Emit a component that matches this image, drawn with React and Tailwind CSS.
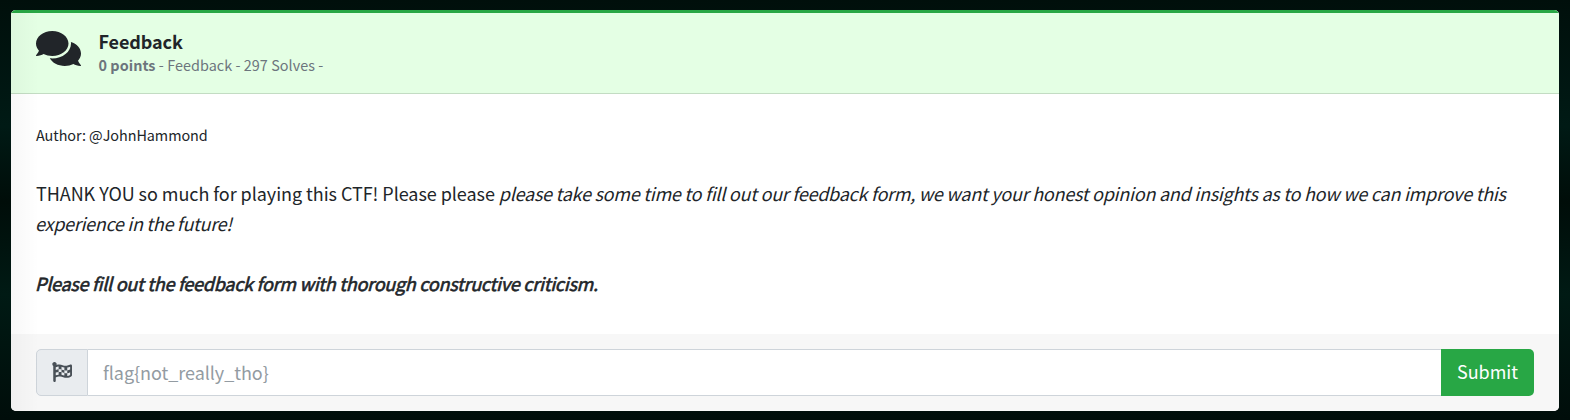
import { FaComments, FaFlagCheckered } from "react-icons/fa";

export default function App() {
  return (
    <div className="h-[420px] w-[1570px] overflow-hidden bg-[linear-gradient(to_bottom,#000f0b,#001a15_30%,#000d09_48%,#001a14_70%,#000d0a)] pt-[10px] pr-[11px] pl-[11px] font-['Noto_Sans_CJK_SC',sans-serif] text-[#212529]">
      <div className="relative flex h-[401px] flex-col overflow-hidden rounded-[5px] bg-white">
        <header className="flex h-[84px] shrink-0 border-t-[3px] border-b border-t-[#28a745] border-b-[#c3dcc3] bg-[#e4ffe4] pl-[25px]">
          <FaComments className="mt-[12.6px] h-[45px] w-[45px] shrink-0" />
          <div className="ml-[17.5px] pt-[16px] whitespace-nowrap">
            <h5 className="text-[18px] leading-[24px] font-bold tracking-[-0.1px]">Feedback</h5>
            <p className="text-[14.4px] leading-[24px] tracking-[0.05px] text-[#6c757d]"><b>0 points</b> - Feedback - 297 Solves -</p>
          </div>
        </header>
        <main className="h-[240px] shrink-0 pt-[26px] pl-[25px] text-[18px] leading-[30px] whitespace-nowrap">
          <p className="text-[14.4px] tracking-[-0.05px]">Author: @JohnHammond</p>
          <p className="mt-[28px]">
            <span className="tracking-[-0.055px]">THANK YOU so much for playing this CTF! Please please </span>
            <em className="tracking-[-0.25px]">please take some time to fill out our feedback form, we want your honest opinion and insights as to how we can improve this</em>
            <br />
            <em className="-ml-px tracking-[-0.3px]">experience in the future!</em>
          </p>
          <p className="mt-[30px] -ml-px tracking-[-0.26px] italic [-webkit-text-stroke:0.6px_#212529]">Please fill out the feedback form with thorough constructive criticism.</p>
        </main>
        <footer className="flex h-[77px] shrink-0 bg-[#f7f7f7] px-[25px] pt-[15px] text-[18px]">
          <div className="flex h-[47px] w-[52px] items-center justify-center rounded-l-[5px] border border-[#ced4da] bg-[#e9ecef] pb-px text-[#495057]">
            <FaFlagCheckered className="h-[20px] w-[20px]" />
          </div>
          <div className="flex h-[47px] flex-1 items-center border-y border-l-0 border-[#ced4da] bg-white pl-[15px] tracking-[-0.05px] text-[#939ba2]">{"flag{not_really_tho}"}</div>
          <button className="h-[47px] w-[93px] rounded-r-[5px] bg-[#28a745] pb-[2px] text-white">Submit</button>
        </footer>
        <div className="pointer-events-none absolute inset-y-0 left-0 w-[28px] bg-linear-to-r from-black/3 to-transparent" />
      </div>
    </div>
  );
}
